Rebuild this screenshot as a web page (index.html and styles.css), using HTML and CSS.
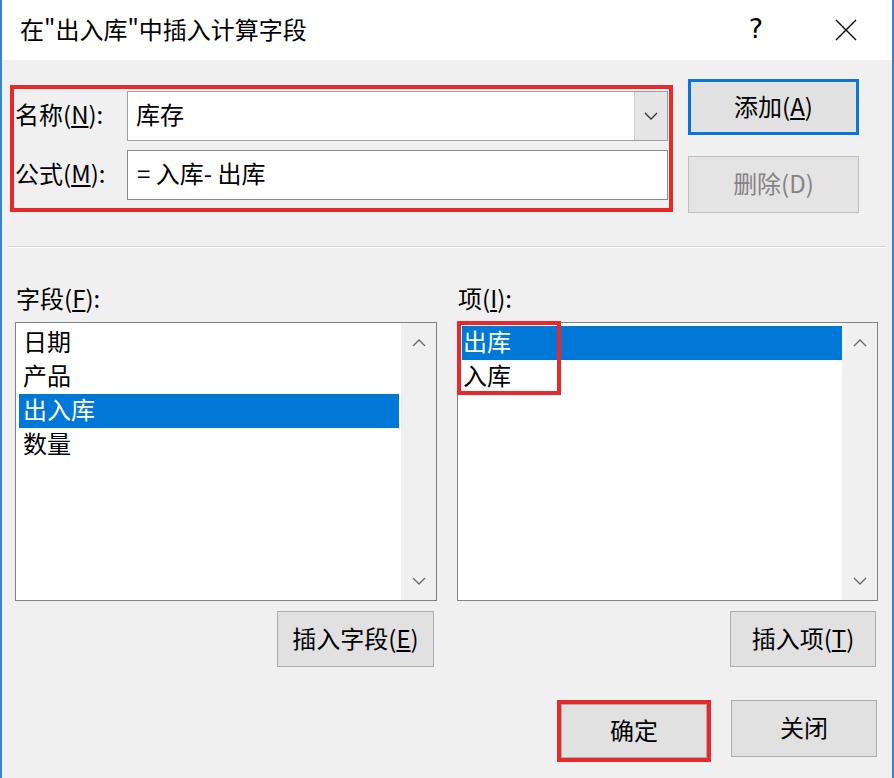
FILE: index.html
```html
<!DOCTYPE html>
<html lang="zh-CN">
<head>
    <meta charset="UTF-8">
    <title>插入计算字段</title>
    <link rel="stylesheet" href="styles.css">
</head>
<body>

<div class="dialog">
    <div class="titlebar">
        <span class="title">在"出入库"中插入计算字段</span>
        <span class="help">?</span>
        <svg class="close" width="22" height="22" viewBox="0 0 22 22">
            <path d="M1 1 L21 21 M21 1 L1 21" stroke="#000" stroke-width="1.4" fill="none"/>
        </svg>
    </div>

    <div class="content">
        <div class="top">
            <div class="formula mark">
                <label class="lbl">名称(<u>N</u>):</label>
                <div class="combo">
                    <span class="combo-text">库存</span>
                    <span class="drop">
                        <svg width="14" height="10" viewBox="0 0 14 10"><polyline points="1,2 7,8 13,2" stroke="#333" stroke-width="1.3" fill="none"/></svg>
                    </span>
                </div>
                <label class="lbl">公式(<u>M</u>):</label>
                <div class="field">= 入库- 出库</div>
            </div>
            <div class="side-buttons">
                <button class="btn btn-default">添加(<u>A</u>)</button>
                <button class="btn btn-wide" disabled>删除(D)</button>
            </div>
        </div>

        <div class="sep"></div>

        <div class="lists">
            <div class="col col-fields">
                <div class="col-label">字段(<u>F</u>):</div>
                <div class="listbox">
                    <ul class="items">
                        <li>日期</li>
                        <li>产品</li>
                        <li class="selected">出入库</li>
                        <li>数量</li>
                    </ul>
                    <div class="scroll">
                        <svg width="14" height="10" viewBox="0 0 14 10"><polyline points="1,8 7,2 13,8" stroke="#666" stroke-width="1.3" fill="none"/></svg>
                        <svg width="14" height="10" viewBox="0 0 14 10"><polyline points="1,2 7,8 13,2" stroke="#666" stroke-width="1.3" fill="none"/></svg>
                    </div>
                </div>
                <div class="col-actions">
                    <button class="btn btn-field">插入字段(<u>E</u>)</button>
                </div>
            </div>

            <div class="col col-items">
                <div class="col-label">项(<u>I</u>):</div>
                <div class="listbox">
                    <ul class="items">
                        <li class="selected">出库</li>
                        <li>入库</li>
                    </ul>
                    <div class="item-mark"></div>
                    <div class="scroll">
                        <svg width="14" height="10" viewBox="0 0 14 10"><polyline points="1,8 7,2 13,8" stroke="#666" stroke-width="1.3" fill="none"/></svg>
                        <svg width="14" height="10" viewBox="0 0 14 10"><polyline points="1,2 7,8 13,2" stroke="#666" stroke-width="1.3" fill="none"/></svg>
                    </div>
                </div>
                <div class="col-actions">
                    <button class="btn btn-item">插入项(<u>T</u>)</button>
                </div>
            </div>
        </div>

        <div class="footer">
            <div class="ok-mark">
                <button class="btn btn-ok">确定</button>
            </div>
            <button class="btn btn-close">关闭</button>
        </div>
    </div>
</div>

</body>
</html>
```

FILE: styles.css
```css
body {
    margin: 0;
    font-family: "Noto Sans CJK SC", "Microsoft YaHei", sans-serif;
    color: #000;
}

.dialog {
    width: 894px;
    height: 778px;
    box-sizing: border-box;
    border-left: 2px solid #3583d2;
    border-right: 2px solid #3583d2;
    background-color: #f0f0f0;
    display: flex;
    flex-direction: column;
}

/* title bar */
.titlebar {
    height: 60px;
    background-color: #fff;
    display: flex;
    align-items: center;
    padding-left: 18px;
    font-size: 24px;
}

.title {
    flex: 1;
    padding-bottom: 3px;
}

.help {
    font-family: "DejaVu Sans", sans-serif;
    font-size: 27px;
    margin-right: 72px;
    padding-bottom: 3px;
}

.close {
    margin-right: 35px;
}

.content {
    flex: 1;
    display: flex;
    flex-direction: column;
    font-size: 24px;
}

/* name / formula block */
.top {
    display: flex;
    align-items: flex-start;
    padding: 19px 0 0 8px;
}

.mark {
    border: 4px solid #e8282b;
}

.formula {
    width: 654px;
    height: 114px;
    margin-top: 6px;
    padding: 2px 1px 3px 0;
    display: grid;
    grid-template-columns: 113px 1fr;
    grid-template-rows: 50px 50px;
    row-gap: 9px;
}

.lbl {
    display: flex;
    align-items: center;
    padding: 0 0 5px 1px;
    white-space: nowrap;
}

.combo {
    display: flex;
    background-color: #fff;
    border: 1px solid #a0a0a0;
}

.combo-text {
    flex: 1;
    display: flex;
    align-items: center;
    padding: 0 0 5px 8px;
}

.drop {
    width: 32px;
    display: flex;
    align-items: center;
    justify-content: center;
    background-color: #e5e5e5;
    border-left: 1px solid #cfcfcf;
}

.field {
    display: flex;
    align-items: center;
    padding: 0 0 5px 9px;
    background-color: #fff;
    border: 1px solid #8a8a8a;
}

.side-buttons {
    display: flex;
    flex-direction: column;
    margin-left: 15px;
}

/* buttons */
.btn {
    font-family: inherit;
    font-size: 24px;
    color: #000;
    background-color: #e1e1e1;
    border: 1px solid #adadad;
    padding: 0 0 4px;
    box-sizing: border-box;
}

.btn-default {
    width: 171px;
    height: 56px;
    border: 3px solid #0a74d8;
}

.btn-wide {
    width: 171px;
    height: 57px;
    margin-top: 21px;
}

.btn:disabled {
    color: #838383;
    border-color: #bfbfbf;
    background-color: #e4e4e4;
}

.sep {
    margin: 33px 6px 0;
    height: 1px;
    background-color: #d4d4d4;
    border-bottom: 1px solid #fff;
}

/* lists */
.lists {
    display: flex;
    gap: 20px;
    padding: 36px 14px 0 13px;
}

.col {
    display: flex;
    flex-direction: column;
}

.col-fields {
    width: 422px;
}

.col-items {
    width: 421px;
}

.col-label {
    height: 30px;
    line-height: 28px;
    margin-bottom: 8px;
    padding-left: 1px;
}

.listbox {
    position: relative;
    height: 279px;
    box-sizing: border-box;
    border: 1px solid #828282;
    background-color: #fff;
    display: flex;
}

.items {
    flex: 1;
    list-style: none;
    margin: 0;
    padding: 3px 2px 0 3px;
}

.items li {
    height: 34px;
    line-height: 30px;
    padding-left: 4px;
}

.items li.selected {
    background-color: #0078d7;
    color: #fff;
}

.col-items .items {
    padding-left: 4px;
    padding-right: 0;
}

.col-items .items li {
    padding-left: 1px;
}

/* red highlight over the two items */
.item-mark {
    position: absolute;
    left: -1px;
    top: -2px;
    width: 96px;
    height: 66px;
    border: 4px solid #e8282b;
}

.scroll {
    width: 35px;
    background-color: #f0f0f0;
    display: flex;
    flex-direction: column;
    align-items: center;
    justify-content: space-between;
    padding: 15px 0 14px;
}

.col-actions {
    display: flex;
    justify-content: flex-end;
    margin-top: 10px;
}

.btn-field {
    width: 157px;
    height: 56px;
    margin-right: 3px;
}

.btn-item {
    width: 146px;
    height: 56px;
    margin-right: 2px;
}

/* footer */
.footer {
    display: flex;
    justify-content: flex-end;
    align-items: flex-start;
    gap: 20px;
    padding: 33px 15px 0 0;
}

.ok-mark {
    border: 4px solid #e8282b;
    display: flex;
}

.btn-ok {
    width: 146px;
    height: 54px;
}

.btn-close {
    width: 146px;
    height: 57px;
}
```
